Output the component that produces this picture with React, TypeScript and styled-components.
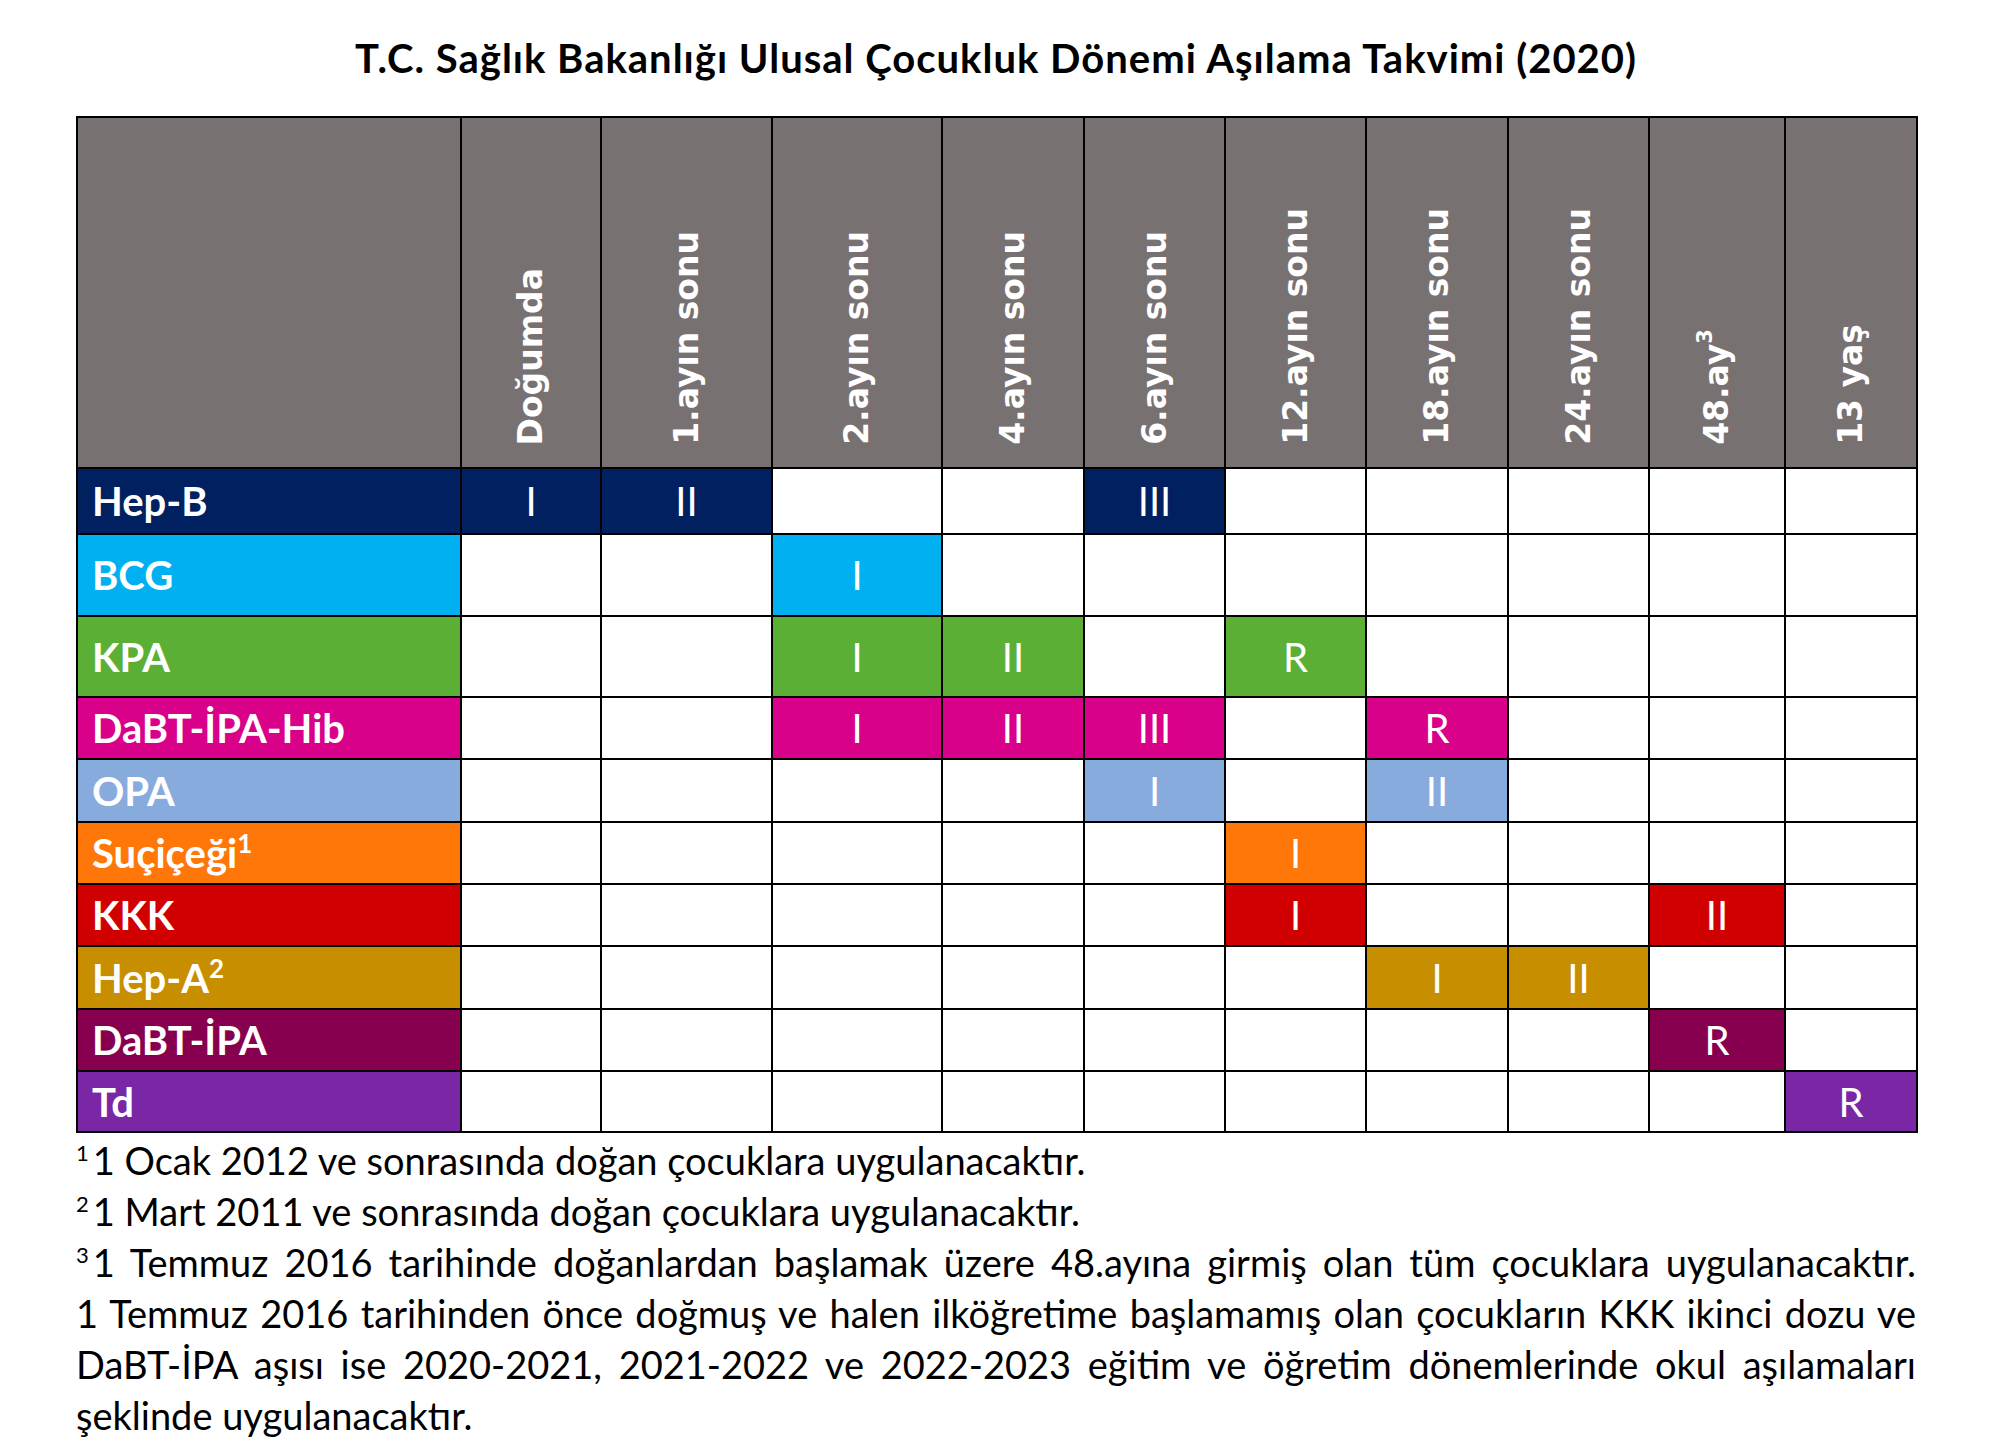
import styled, { createGlobalStyle } from "styled-components";

const GlobalStyle = createGlobalStyle`
  html, body {
    margin: 0;
    padding: 0;
    background: #ffffff;
  }
`;

const COLUMNS = [
  { label: "Doğumda" },
  { label: "1.ayın sonu" },
  { label: "2.ayın sonu" },
  { label: "4.ayın sonu" },
  { label: "6.ayın sonu" },
  { label: "12.ayın sonu" },
  { label: "18.ayın sonu" },
  { label: "24.ayın sonu" },
  { label: "48.ay", sup: "3" },
  { label: "13 yaş" },
];

const COL_WIDTHS = [384, 140, 171, 170, 142, 141, 141, 142, 141, 136, 132];

interface Vaccine {
  name: string;
  sup?: string;
  color: string;
  height: number;
  doses: Record<number, string>;
}

const VACCINES: Vaccine[] = [
  { name: "Hep-B", color: "#002060", height: 66, doses: { 0: "I", 1: "II", 4: "III" } },
  { name: "BCG", color: "#00b0f0", height: 82, doses: { 2: "I" } },
  { name: "KPA", color: "#5aaf34", height: 81, doses: { 2: "I", 3: "II", 5: "R" } },
  { name: "DaBT-İPA-Hib", color: "#d9008a", height: 62, doses: { 2: "I", 3: "II", 4: "III", 6: "R" } },
  { name: "OPA", color: "#88abde", height: 63, doses: { 4: "I", 6: "II" } },
  { name: "Suçiçeği", sup: "1", color: "#ff7708", height: 62, doses: { 5: "I" } },
  { name: "KKK", color: "#d10000", height: 62, doses: { 5: "I", 8: "II" } },
  { name: "Hep-A", sup: "2", color: "#c78e00", height: 63, doses: { 6: "I", 7: "II" } },
  { name: "DaBT-İPA", color: "#870050", height: 62, doses: { 8: "R" } },
  { name: "Td", color: "#7a27a6", height: 61, doses: { 9: "R" } },
];

export default function App() {
  return (
    <>
      <GlobalStyle />
      <Page>
        <Title>T.C. Sağlık Bakanlığı Ulusal Çocukluk Dönemi Aşılama Takvimi (2020)</Title>
        <Schedule>
          <colgroup>
            {COL_WIDTHS.map((w, i) => (
              <col key={i} style={{ width: w }} />
            ))}
          </colgroup>
          <thead>
            <tr>
              <CornerCell />
              {COLUMNS.map((c) => (
                <AgeCell key={c.label}>
                  <AgeLabel>
                    {c.label}
                    {c.sup && <AgeSup>{c.sup}</AgeSup>}
                  </AgeLabel>
                </AgeCell>
              ))}
            </tr>
          </thead>
          <tbody>
            {VACCINES.map((v) => (
              <VaccineRow key={v.name} $height={v.height}>
                <NameCell $bg={v.color}>
                  {v.name}
                  {v.sup && <NameSup>{v.sup}</NameSup>}
                </NameCell>
                {COLUMNS.map((c, i) => (
                  <DoseCell key={c.label} $bg={v.doses[i] ? v.color : undefined}>
                    {v.doses[i] ?? ""}
                  </DoseCell>
                ))}
              </VaccineRow>
            ))}
          </tbody>
        </Schedule>

        <Notes>
          <NoteLine>
            <NoteSup>1</NoteSup>1 Ocak 2012 ve sonrasında doğan çocuklara uygulanacaktır.
          </NoteLine>
          <NoteLine>
            <NoteSup>2</NoteSup>1 Mart 2011 ve sonrasında doğan çocuklara uygulanacaktır.
          </NoteLine>
          <JustLine>
            <NoteSup>3</NoteSup>1 Temmuz 2016 tarihinde doğanlardan başlamak üzere 48.ayına girmiş olan tüm çocuklara uygulanacaktır.
          </JustLine>
          <JustLine>
            1 Temmuz 2016 tarihinden önce doğmuş ve halen ilköğretime başlamamış olan çocukların KKK ikinci dozu ve
          </JustLine>
          <JustLine>
            DaBT-İPA aşısı ise 2020-2021, 2021-2022 ve 2022-2023 eğitim ve öğretim dönemlerinde okul aşılamaları
          </JustLine>
          <NoteLine>şeklinde uygulanacaktır.</NoteLine>
        </Notes>
      </Page>
    </>
  );
}

const Page = styled.div`
  width: 1840px;
  padding: 35px 0 0 76px;
  font-family: "Lato", "Liberation Sans", sans-serif;
`;

const Title = styled.h1`
  margin: 0 0 35px 0;
  height: 46px;

  text-align: center;
  color: #000000;

  font-size: 40px;
  font-weight: 700;
  letter-spacing: 1px;
  line-height: 46px;
`;

const Schedule = styled.table`
  width: 1840px;
  table-layout: fixed;
  border-collapse: collapse;
  border: 2px solid #000000;
`;

const CornerCell = styled.th`
  height: 349px;
  padding: 0;

  background-color: #787171;
  border: 2px solid #000000;
`;

const AgeCell = styled.th`
  padding: 0 0 19px 0;

  vertical-align: bottom;
  text-align: center;

  background-color: #787171;
  border: 2px solid #000000;
`;

const AgeLabel = styled.span`
  display: inline-block;

  writing-mode: vertical-rl;
  transform: rotate(180deg);

  color: #ffffff;

  font-family: "DejaVu Sans", "Liberation Sans", sans-serif;
  font-size: 33px;
  font-weight: 700;
  line-height: 40px;
  white-space: nowrap;
`;

const AgeSup = styled.sup`
  font-size: 21px;
  line-height: 0;
`;

const VaccineRow = styled.tr<{ $height: number }>`
  height: ${(p) => p.$height}px;
`;

const NameCell = styled.td<{ $bg: string }>`
  padding: 0 0 0 14px;

  background-color: ${(p) => p.$bg};
  border: 2px solid #000000;

  color: #ffffff;

  font-size: 40px;
  font-weight: 700;
  line-height: 1;
  white-space: nowrap;
`;

const NameSup = styled.sup`
  font-size: 26px;
  line-height: 0;
  vertical-align: 15px;
`;

const DoseCell = styled.td<{ $bg?: string }>`
  padding: 0;

  text-align: center;
  vertical-align: middle;

  background-color: ${(p) => p.$bg ?? "#ffffff"};
  border: 2px solid #000000;

  color: #ffffff;

  font-size: 40px;
  font-weight: 400;
  line-height: 1;
`;

const Notes = styled.div`
  margin-top: 2px;
  width: 1840px;

  color: #000000;

  font-size: 38px;
  line-height: 51px;
`;

const NoteLine = styled.div`
  white-space: nowrap;
`;

const JustLine = styled.div`
  text-align: justify;
  text-align-last: justify;
  white-space: nowrap;
`;

const NoteSup = styled.sup`
  margin-right: 4px;
  font-size: 22px;
  line-height: 0;
`;
